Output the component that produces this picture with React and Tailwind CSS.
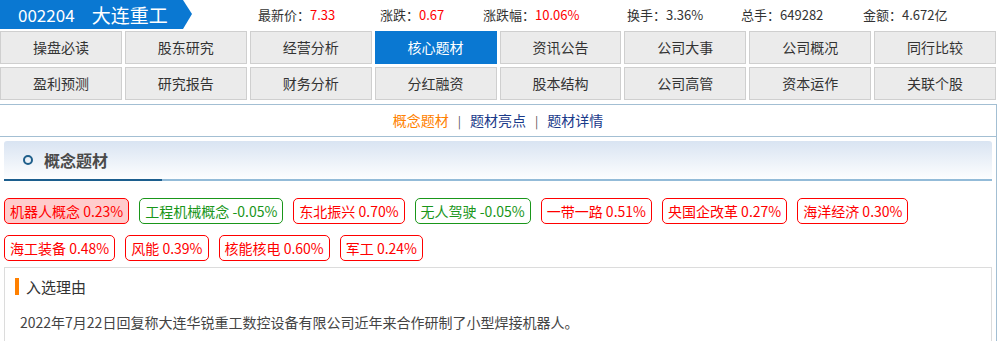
import React from "react";

const FONT = { fontFamily: '"Noto Sans CJK SC", "Liberation Sans", sans-serif' };

const stats = [
  { label: "最新价：", value: "7.33", w: "w-[122px]", red: true },
  { label: "涨跌：", value: "0.67", w: "w-[103px]", red: true },
  { label: "涨跌幅：", value: "10.06%", w: "w-[144px]", red: true },
  { label: "换手：", value: "3.36%", w: "w-[114px]" },
  { label: "总手：", value: "649282", w: "w-[122px]" },
  { label: "金额：", value: "4.672亿", w: "w-[120px]" },
];

const navRows = [
  ["操盘必读", "股东研究", "经营分析", "核心题材", "资讯公告", "公司大事", "公司概况", "同行比较"],
  ["盈利预测", "研究报告", "财务分析", "分红融资", "股本结构", "公司高管", "资本运作", "关联个股"],
];

const tags = [
  { t: "机器人概念", v: "0.23%", c: "red", active: true },
  { t: "工程机械概念", v: "-0.05%", c: "green" },
  { t: "东北振兴", v: "0.70%", c: "red" },
  { t: "无人驾驶", v: "-0.05%", c: "green" },
  { t: "一带一路", v: "0.51%", c: "red" },
  { t: "央国企改革", v: "0.27%", c: "red" },
  { t: "海洋经济", v: "0.30%", c: "red" },
  { t: "海工装备", v: "0.48%", c: "red" },
  { t: "风能", v: "0.39%", c: "red" },
  { t: "核能核电", v: "0.60%", c: "red" },
  { t: "军工", v: "0.24%", c: "red" },
];

export default function App() {
  return (
    <div className="w-[998px] h-[341px] overflow-hidden bg-white" style={FONT}>
      {/* top bar */}
      <div className="flex items-center h-[29px]">
        <div className="w-[192px] h-[29px] bg-[#0a78d2] text-white flex items-center [clip-path:polygon(0_0,183px_0,192px_14px,183px_29px,0_29px)]">
          <span className="ml-[18px] text-[17px] leading-none">002204</span>
          <span className="ml-[17px] text-[19px] leading-none">大连重工</span>
        </div>
        <div className="flex ml-[66px] text-[13px] leading-none">
          {stats.map((s) => (
            <div key={s.label} className={`${s.w} whitespace-nowrap`}>
              <span className="text-[#333]">{s.label}</span>
              <span className={s.red ? "text-[#ff0000]" : "text-[#333]"}>{s.value}</span>
            </div>
          ))}
        </div>
      </div>

      {/* nav grid */}
      <div className="mt-[2px] w-[996px] grid grid-cols-8 gap-[3px]">
        {navRows.flat().map((n) => {
          const active = n === "核心题材";
          return (
            <div
              key={n}
              className={
                active
                  ? "h-[33px] flex items-center justify-center bg-[#0a78d2] border border-[#0a78d2] text-white text-[14px]"
                  : "h-[33px] flex items-center justify-center bg-[#ebebeb] border border-[#cfcfcf] text-[#333] text-[14px]"
              }
            >
              {n}
            </div>
          );
        })}
      </div>

      {/* panel */}
      <div className="mt-[4px] w-[997px] border-t border-r border-[#a3bfd3]">
        <div className="h-[32px] border-b border-[#a3bfd3] flex items-center justify-center text-[14px]">
          <span className="text-[#ff7f00]">概念题材</span>
          <span className="mx-[9px] text-[#555] text-[12px]">|</span>
          <span className="text-[#1a3a8a]">题材亮点</span>
          <span className="mx-[9px] text-[#555] text-[12px]">|</span>
          <span className="text-[#1a3a8a]">题材详情</span>
        </div>

        {/* section header */}
        <div className="mt-[4px] ml-[4px] w-[988px] h-[40px] flex flex-col rounded-t-[3px] bg-gradient-to-b from-[#d9e4f2] to-[#ffffff]">
          <div className="flex-1 flex items-center">
            <span className="ml-[19px] w-[10px] h-[10px] rounded-full border-2 border-[#1f5f8b]" />
            <span className="ml-[11px] text-[16px] font-bold text-[#4a4a4a]">概念题材</span>
          </div>
          <div className="flex h-[2px]">
            <div className="w-[158px] bg-[#1c5e8e]" />
            <div className="flex-1 bg-[#93bbd8]" />
          </div>
        </div>

        {/* tags */}
        <div className="mt-[17px] px-[4px] flex flex-wrap gap-x-[10px] gap-y-[11px]">
          {tags.map((g) => (
            <div
              key={g.t}
              className={
                (g.c === "red"
                  ? "border-[#ff0000] text-[#ff0000] "
                  : "border-[#1a961a] text-[#1a961a] ") +
                (g.active ? "bg-[#ffcccc] " : "bg-white ") +
                "h-[26px] px-[5px] border rounded-[5px] flex items-center text-[14px] whitespace-nowrap"
              }
            >
              {g.t}&nbsp;{g.v}
            </div>
          ))}
        </div>

        {/* reason box */}
        <div className="mt-[6px] ml-[4px] w-[988px] h-[80px] border border-[#dcdcdc] border-b-0">
          <div className="mt-[10px] ml-[10px] flex items-center">
            <span className="w-[4px] h-[17px] bg-[#ff8000]" />
            <span className="ml-[7px] text-[15px] text-[#333] leading-none">入选理由</span>
          </div>
          <div className="mt-[20px] ml-[15px] text-[14px] text-[#444] leading-none">
            2022年7月22日回复称大连华锐重工数控设备有限公司近年来合作研制了小型焊接机器人。
          </div>
        </div>
      </div>
    </div>
  );
}
